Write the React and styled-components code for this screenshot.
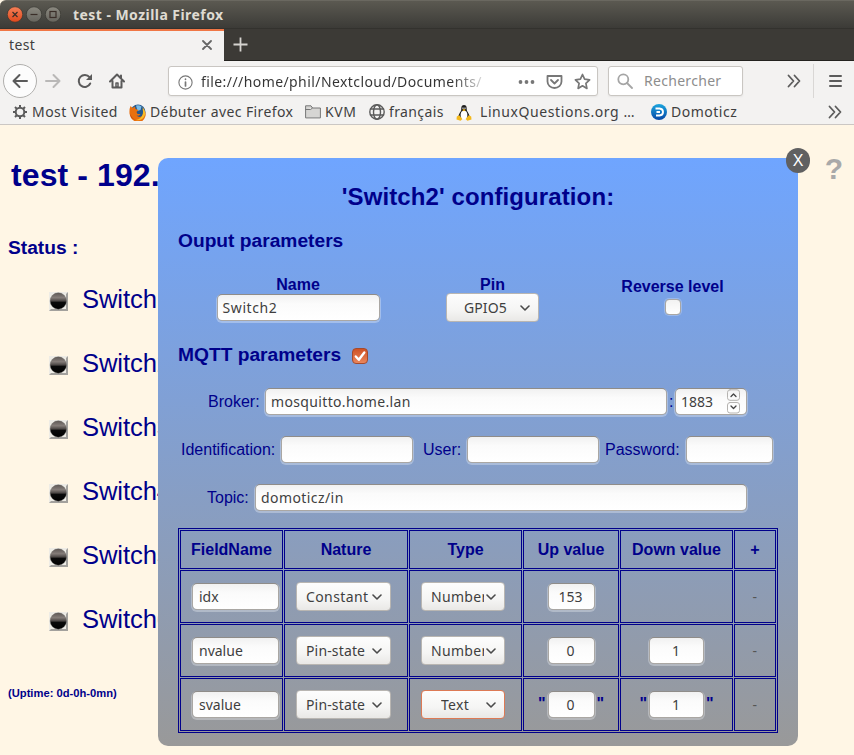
import React from "react";
import styled, { createGlobalStyle, css } from "styled-components";

const UI = `"Noto Sans", "Open Sans", sans-serif`;
const NAVY = "#00008b";

const Global = createGlobalStyle`
  *, *::before, *::after { box-sizing: border-box; }
  body { margin: 0; overflow: hidden; background: #fff6e5; font-family: "Liberation Sans", Arial, sans-serif; }
  svg { display: block; flex: none; }
`;

const Window = styled.div`
  position: relative;
  width: 854px;
  height: 755px;
  display: flex;
  flex-direction: column;
  overflow: hidden;
`;

/* ---------- browser chrome ---------- */
const TitleBar = styled.header`
  height: 29px;
  flex: none;
  display: flex;
  align-items: center;
  gap: 3px;
  padding-left: 7px;
  background: linear-gradient(#5b5951, #45443f 70%, #3c3b37);
  border-top: 1px solid #6a6860;
  border-bottom: 1px solid #33322e;
  border-radius: 6px 0 0 0;
`;

const WindowTitle = styled.h1`
  margin: 0 0 0 9px;
  font: 700 14px/20px ${UI};
  letter-spacing: 0.45px;
  color: #dfdbd2;
  white-space: nowrap;
`;

const TabStrip = styled.nav`
  height: 32px;
  flex: none;
  display: flex;
  align-items: center;
  background: #3c3a36;
  border-bottom: 1px solid #23221f;
`;

const Tab = styled.div`
  width: 224px;
  height: 32px;
  flex: none;
  display: flex;
  align-items: center;
  justify-content: space-between;
  padding: 0 12px 2px 9px;
  background: #f3f2f1;
  border-top: 2px solid #f07746;
`;

const Text = styled.span`
  font: 400 14px/20px ${UI};
  letter-spacing: ${(p) => p.$ls ?? 0.38}px;
  color: ${(p) => p.$color || "#3f3f3f"};
  white-space: nowrap;
`;

const PlusIcon = styled.svg`
  margin-left: 9px;
`;

const Toolbar = styled.div`
  height: 40px;
  flex: none;
  display: flex;
  align-items: center;
  background: #f3f2f1;
  padding-left: 3px;
`;

const BackButton = styled.div`
  width: 34px;
  height: 34px;
  display: flex;
  align-items: center;
  justify-content: center;
  border: 1px solid #b0afad;
  border-radius: 50%;
  background: #fcfcfc;
`;

const ToolGroup = styled.div`
  display: flex;
  align-items: center;
  margin-left: 8px;
  gap: 16px;
  width: 123px;
`;

const Box = styled.div`
  height: 30px;
  flex: none;
  display: flex;
  align-items: center;
  background: #fff;
  border: 1px solid #c9c6c2;
  border-radius: 3px;
  box-shadow: 0 1px 2px rgba(0, 0, 0, 0.06);
`;

const AddressBox = styled(Box)`
  width: 430px;
  padding: 2px 0 0 9px;
`;

const Address = styled(Text)`
  width: 285px;
  margin: 0 32px 0 8px;
  background: linear-gradient(90deg, #333 88%, #ddd 99%);
  background-clip: text;
  color: transparent;
`;

const AddressActions = styled.div`
  display: flex;
  align-items: center;
  gap: 11px;
  padding-bottom: 1px;
`;

const SearchBox = styled(Box)`
  width: 135px;
  margin-left: 10px;
  padding-left: 8px;
  gap: 11px;
`;

const ToolEnd = styled.div`
  height: 34px;
  display: flex;
  align-items: center;
  margin-left: 44px;
`;

const Divider = styled.i`
  width: 1px;
  height: 34px;
  margin: 0 15px 0 12px;
  background: #d9d7d5;
`;

const Bookmarks = styled.div`
  height: 24px;
  flex: none;
  display: flex;
  align-items: center;
  padding: 0 0 1px 12px;
  background: #f3f2f1;
  border-bottom: 1px solid #cbc7c4;
`;

const Bookmark = styled.div`
  width: ${(p) => p.$w}px;
  flex: none;
  display: flex;
  align-items: center;
  gap: ${(p) => p.$gap || 4}px;
`;

/* ---------- page behind the dialog ---------- */
const Page = styled.main`
  flex: 1;
  display: flex;
  flex-direction: column;
  padding: 30px 8px 0;
  background: #fff6e5;
  color: ${NAVY};
`;

const PageHead = styled.div`
  display: flex;
  justify-content: space-between;
  height: 40px;
  padding: 0 3px;
`;

const PageTitle = styled.h2`
  margin: 0;
  font-size: 32px;
  line-height: 40px;
  letter-spacing: 0.1px;
  white-space: nowrap;
`;

const Help = styled.b`
  font-size: 30px;
  line-height: 28px;
  color: #a9a9a9;
`;

const StatusTitle = styled.h3`
  margin: 41px 0 7px;
  font-size: 19.2px;
  line-height: 24px;
`;

const SwitchRow = styled.div`
  height: 64px;
  display: flex;
  align-items: center;
  gap: 14px;
  padding-left: 41px;
  font-size: 25.6px;
  letter-spacing: -0.1px;
  line-height: 30px;
`;

const Led = styled.svg`
  width: 19px;
  height: 19px;
  margin-top: 4px;
`;

const Uptime = styled.small`
  margin-top: 35px;
  font-size: 11.2px;
  font-weight: 700;
  line-height: 14px;
`;

/* ---------- dialog ---------- */
const Dialog = styled.section`
  position: absolute;
  left: 158px;
  top: 158px;
  width: 640px;
  height: 588px;
  padding: 25px 20px 0;
  border-radius: 10px;
  background: linear-gradient(#6fa5ff, #999);
  color: ${NAVY};
  font-size: 16px;
`;

const CloseButton = styled.div`
  position: absolute;
  right: -12px;
  top: -10px;
  width: 24px;
  height: 25px;
  border-radius: 12px;
  background: #606061;
  color: #fff;
  text-align: center;
  line-height: 25px;
`;

const DialogTitle = styled.h2`
  margin: 0;
  font-size: 24px;
  line-height: 28px;
  letter-spacing: 0.1px;
  text-align: center;
`;

const SectionTitle = styled.h3`
  display: flex;
  align-items: center;
  gap: 11px;
  height: 22px;
  margin: ${(p) => p.$top}px 0 0;
  font-size: 19.2px;
  line-height: 22px;
`;

const Params = styled.div`
  display: grid;
  grid-template-columns: 240px 149px 211px;
  height: 48px;
  margin-top: 22px;
`;

const Param = styled.label`
  display: flex;
  flex-direction: column;
  align-items: center;
  padding-top: ${(p) => p.$pad || 0}px;
  font-weight: 700;
`;

const ParamLabel = styled.span`
  height: ${(p) => p.$h}px;
  line-height: 22px;
`;

const Field = styled.span`
  width: ${(p) => p.$w}px;
  height: 27px;
  flex: none;
  display: flex;
  align-items: center;
  justify-content: ${(p) => (p.$center ? "center" : "flex-start")};
  padding: 0 6px 0 5px;
  border: 1px solid #aaa7a3;
  border-top-color: #8f8c89;
  border-radius: 5px;
  background: linear-gradient(#f1f1f1, #fbfbfb 35%, #fff);
  box-shadow: 0 1px 0 1px rgba(255, 255, 255, 0.3);
`;

const PortField = styled(Field)`
  justify-content: space-between;
`;

const Dropdown = styled.span`
  width: ${(p) => p.$w}px;
  height: 29px;
  flex: none;
  display: flex;
  align-items: center;
  padding: 0 8px 0 ${(p) => p.$pad || 9}px;
  justify-content: space-between;
  border: 1px solid ${(p) => (p.$focus ? "#dd7a55" : "#b9b6b2")};
  border-radius: 4px;
  background: linear-gradient(#fdfdfd, #f5f5f4 60%, #e9e8e6);

  ${Text} {
    overflow: hidden;
    width: ${(p) => (p.$clip ? `${p.$clip}px` : "auto")};
  }
`;

const CheckBox = styled.span`
  width: 16px;
  height: 16px;
  display: flex;
  border-radius: 4px;
  border: 1px solid #aaa7a3;
  background: linear-gradient(#f2f2f2, #fff);
  box-shadow: 0 0 0 1px rgba(255, 255, 255, 0.25);
  ${(p) =>
    p.$on &&
    css`
      margin-top: 1px;
      border-color: #a64a2c;
      background: linear-gradient(#cf5225, #e9865c);
      box-shadow: none;
    `}
`;

const FormRow = styled.div`
  display: flex;
  height: 27px;
  margin-top: ${(p) => p.$top}px;
  padding-left: ${(p) => p.$left}px;
  line-height: 27px;
`;

const Caption = styled.span`
  width: ${(p) => p.$w}px;
  flex: none;
  padding-left: ${(p) => p.$pad || 0}px;
  white-space: nowrap;
`;

const Table = styled.div`
  display: grid;
  grid-template-columns: 103px 124px 113px 96px 113px 42px;
  grid-template-rows: 39px 53px 53px 53px;
  gap: 1px;
  width: 600px;
  margin-top: 17px;
  padding: 1px;
  border: 1px solid ${NAVY};
`;

const Cell = styled.div`
  display: flex;
  align-items: center;
  justify-content: center;
  gap: 2px;
  border: 1px solid ${NAVY};
  font-weight: 700;
  white-space: nowrap;
`;

const NameCell = styled(Cell)`
  justify-content: flex-start;
  padding-left: 11px;

  ${Text} {
    padding-left: 1px;
  }
`;

const SelectCell = styled(Cell)`
  justify-content: flex-start;
  padding: 0 0 0 11px;
`;

const Quote = styled.span`
  height: 19px;
`;

/* ---------- icons ---------- */
const WinButton = ({ kind }) => (
  <svg width="16" height="17" viewBox="0 0 16 17">
    <defs>
      <linearGradient id={`wb-${kind}`} x2="0" y2="1">
        <stop stopColor={kind === "close" ? "#f58058" : "#8b8980"} />
        <stop offset="1" stopColor={kind === "close" ? "#e0481b" : "#66645d"} />
      </linearGradient>
    </defs>
    <circle cx="8" cy="8.5" r="7.7" fill={`url(#wb-${kind})`} stroke="#33322e" strokeWidth=".6" />
    <g fill="none" stroke="#3a2e28" strokeWidth="1.2">
      {kind === "close" && <path d="M5.5 6l5 5m0-5l-5 5" />}
      {kind === "min" && <path d="M4.500 8.500h7" />}
      {kind === "max" && <rect x="5" y="5.5" width="6" height="6" />}
    </g>
  </svg>
);

const SwitchLed = () => (
  <Led viewBox="0 0 19 19">
    <defs>
      <linearGradient id="led" x2="0" y2="1">
        <stop stopColor="#5e5855" />
        <stop offset=".3" stopColor="#857d79" />
        <stop offset=".5" stopColor="#4a4543" />
        <stop offset=".58" stopColor="#0a0a0a" />
        <stop offset="1" stopColor="#000" />
      </linearGradient>
    </defs>
    <path d="M0 0h19v19H0z" fill="#eeece6" />
    <path d="M19 0v19H0l2-2h15V2z" fill="#a3a19d" />
    <circle cx="9.300" cy="9" r="8.200" fill="url(#led)" stroke="#6b6764" strokeWidth=".4" />
  </Led>
);

const Glyph = ({ d, w = 16, h = 16, color = "#5b5b5b", sw = 2, children }) => (
  <svg width={w} height={h} viewBox={`0 0 ${w} ${h}`} fill="none" stroke={color} strokeWidth={sw} strokeLinecap="round" strokeLinejoin="round">
    {d && <path d={d} />}
    {children}
  </svg>
);

const Chevron = () => <Glyph w={10} h={10} sw={1.6} color="#4a4a4a" d="M1 3l4 4l4-4" />;
const More = () => <Glyph w={14} h={14} sw={1.8} d="M1.500 1.500l5 5.500l-5 5.500M7.500 1.500l5 5.500l-5 5.500" />;

const FoxIcon = () => (
  <svg width="17" height="17" viewBox="0 0 17 17">
    <circle cx="9" cy="8" r="7.500" fill="#24588f" />
    <path d="M7 1.500q3-1 5.500 1l-1 3.500-3 1z" fill="#79bde8" />
    <path d="M1.500 2l2 2 2.500-1.500.5 2.500 3 1-2 2 1 2 3 0q-2 3-4 1 2 3.500 5.500 1 2-3 .5-7 4 3 3 7-2 6.500-8 6.500Q1 16 .5 9 .2 5 1.500 2z" fill="#e9700f" />
    <path d="M13.500 3q4.500 5 1.500 10-3 4-8 3 5-1 6.500-5 1-3 0-8z" fill="#f9bd28" />
    <path d="M.7 9q.8 6 6.300 7.300-5-2.300-6.300-7.300z" fill="#b53a12" />
  </svg>
);

const TuxIcon = () => (
  <svg width="16" height="17" viewBox="0 0 16 17">
    <path d="M8 1c-3 0-2.600 3-2.800 5C5 8 2 10 2.500 14h11c.5-4-2.500-6-2.700-8C10.600 4 11 1 8 1z" fill="#1c1c1c" />
    <ellipse cx="8" cy="11" rx="3.400" ry="4.300" fill="#fff" />
    <path d="M6.500 3.500h1v1.500h-1zM8.500 3.500h1v1.500h-1z" fill="#fff" />
    <path d="M6.200 6L8 5l1.800 1L8 7.300z" fill="#f4b91c" />
    <path d="M.8 12.500l2.400-1.200 3.200 3.700-1.800 1.700L.5 15.500zM15.200 12.500l-2.400-1.200-3.200 3.700 1.800 1.700 4.100-1.200z" fill="#f4b91c" />
  </svg>
);

const DomoticzIcon = () => (
  <svg width="16" height="16" viewBox="0 0 16 16">
    <defs>
      <linearGradient id="dz" x2="0" y2="1">
        <stop stopColor="#1ba6de" />
        <stop offset="1" stopColor="#0747a6" />
      </linearGradient>
    </defs>
    <circle cx="8" cy="8" r="8" fill="url(#dz)" />
    <path d="M4.500 4.500H8.500q3.500.3 3.500 3.500t-3.500 3.500H5M5.500 8H9" fill="none" stroke="#fff" strokeWidth="1.900" />
  </svg>
);

const GearIcon = () => (
  <Glyph sw={2}>
    <circle cx="8" cy="8" r="4.300" />
    <path strokeLinecap="butt" d="M8 1v3M8 12v3M1 8h3M12 8h3M3 3l2.100 2.100M11 11l2 2M13 3L11 5M5 11l-2 2" />
  </Glyph>
);

const Spinner = () => (
  <Glyph w={13} h={25} sw={1} color="#b5b3b0">
    <rect x=".5" y=".8" width="12" height="10.500" rx="2.500" />
    <rect x=".5" y="13.500" width="12" height="10.500" rx="2.500" />
    <path stroke="#444" strokeWidth="1.300" d="M4 7.500l2.500-2.500l2.500 2.500M4 17l2.500 2.500l2.500-2.500" />
  </Glyph>
);

/* ---------- data ---------- */
const switches = ["Switch1", "Switch2", "Switch3", "Switch4", "Switch5", "Switch6"];
const columns = ["FieldName", "Nature", "Type", "Up value", "Down value", "+"];
const fields = [
  { name: "idx", nature: "Constant", type: "Number", up: "153" },
  { name: "nvalue", nature: "Pin-state", type: "Number", up: "0", down: "1" },
  { name: "svalue", nature: "Pin-state", type: "Text", up: "0", down: "1" },
];

const ValueCell = ({ value, width, quoted }) => (
  <Cell>
    {quoted && <Quote>"</Quote>}
    {value !== undefined && (
      <Field $w={width} $center>
        <Text $ls={0}>{value}</Text>
      </Field>
    )}
    {quoted && <Quote>"</Quote>}
  </Cell>
);

const FieldRow = ({ row }) => {
  const isText = row.type === "Text";
  return (
    <>
      <NameCell>
        <Field $w={87}>
          <Text $ls={0}>{row.name}</Text>
        </Field>
      </NameCell>
      <SelectCell>
        <Dropdown $w={95}>
          <Text $ls={row.nature === "Constant" ? 0.4 : 0.15}>{row.nature}</Text>
          <Chevron />
        </Dropdown>
      </SelectCell>
      <SelectCell>
        <Dropdown $w={84} $focus={isText} $pad={isText ? 19 : 9} $clip={isText ? 0 : 53}>
          <Text $ls={0.3}>{row.type}</Text>
          <Chevron />
        </Dropdown>
      </SelectCell>
      <ValueCell value={row.up} width={47} quoted={isText} />
      <ValueCell value={row.down} width={55} quoted={isText} />
      <Cell>
        <Text $color="#555">-</Text>
      </Cell>
    </>
  );
};

export default function App() {
  return (
    <Window>
      <Global />
      <TitleBar>
        <WinButton kind="close" />
        <WinButton kind="min" />
        <WinButton kind="max" />
        <WindowTitle>test - Mozilla Firefox</WindowTitle>
      </TitleBar>
      <TabStrip>
        <Tab>
          <Text>test</Text>
          <Glyph w={10} h={10} sw={1.8} color="#666" d="M1 1l8 8M9 1l-8 8" />
        </Tab>
        <PlusIcon width="15" height="15" viewBox="0 0 15 15" fill="none" stroke="#d5d3cf" strokeWidth="1.800">
          <path d="M7.500 .5v14M.5 7.500h14" />
        </PlusIcon>
      </TabStrip>
      <Toolbar>
        <BackButton>
          <Glyph d="M15 8H1.500M7.500 2L1.500 8l6 6" />
        </BackButton>
        <ToolGroup>
          <Glyph color="#b9b8b7" d="M1 8h13.500M8.500 2l6 6l-6 6" />
          <Glyph>
            <path d="M13.200 10.500A6 6 0 1 1 12.500 4.200" />
            <path d="M15 1v6H9z" fill="#5b5b5b" stroke="none" />
          </Glyph>
          <Glyph>
            <path d="M1 8.500L8 1.500l7 7M3.500 8v6.500h9V8M12 2.500v3" />
            <path strokeWidth="1.500" d="M7 10h2v4H7z" />
          </Glyph>
        </ToolGroup>
        <AddressBox>
          <Glyph w={15} h={15} sw={1.1} color="#777">
            <circle cx="7.500" cy="7.500" r="6.600" />
            <path strokeWidth="1.700" d="M7.500 7v4M7.500 4.200v.1" />
          </Glyph>
          <Address $ls={0.42}>file:///home/phil/Nextcloud/Documents/</Address>
          <AddressActions>
            <Glyph w={17} sw={1}>
              <g fill="#777" stroke="none">
                <circle cx="2.500" cy="8" r="1.900" />
                <circle cx="8.500" cy="8" r="1.900" />
                <circle cx="14.500" cy="8" r="1.900" />
              </g>
            </Glyph>
            <Glyph w={17} color="#777" sw={1.8} d="M1.500 2h14v5.500a7 6.500 0 0 1-14 0zM5 6l3.500 3.500L12 6" />
            <Glyph w={17} h={17} color="#777" sw={1.7} d="M8.500 1.500l2.100 4.700 5 .6-3.700 3.500 1 5.100-4.400-2.600-4.400 2.600 1-5.100L1.400 6.800l5-.6z" />
          </AddressActions>
        </AddressBox>
        <SearchBox>
          <Glyph w={16} color="#a5a5a5" sw={1.8}>
            <circle cx="6.300" cy="6.300" r="5" />
            <path d="M10 10l5 5" />
          </Glyph>
          <Text $ls={0.3} $color="#8d8d8d">Rechercher</Text>
        </SearchBox>
        <ToolEnd>
          <More />
          <Divider />
          <Glyph w={13} h={12} d="M1 1h11M1 6h11M1 11h11" />
        </ToolEnd>
      </Toolbar>
      <Bookmarks>
        <Bookmark $w={117}>
          <GearIcon />
          <Text $ls={0.45}>Most Visited</Text>
        </Bookmark>
        <Bookmark $w={176}>
          <FoxIcon />
          <Text>Débuter avec Firefox</Text>
        </Bookmark>
        <Bookmark $w={64}>
          <Glyph color="#777" sw={1}>
            <path fill="#d6d5d3" d="M.6 13.500V1.800h5.400l1.500 2.200h7.900v9.500zM.6 5.500h5l1.900-1.500" />
          </Glyph>
          <Text $ls={0.6}>KVM</Text>
        </Bookmark>
        <Bookmark $w={87}>
          <Glyph sw={1.4}>
            <circle cx="8" cy="8" r="7.200" />
            <ellipse cx="8" cy="8" rx="3.500" ry="7.200" />
            <path d="M1.500 5h13M1.500 11h13" />
          </Glyph>
          <Text>français</Text>
        </Bookmark>
        <Bookmark $w={195} $gap={8}>
          <TuxIcon />
          <Text $ls={0.58}>LinuxQuestions.org …</Text>
        </Bookmark>
        <Bookmark $w={177}>
          <DomoticzIcon />
          <Text $ls={0.5}>Domoticz</Text>
        </Bookmark>
        <More />
      </Bookmarks>

      <Page>
        <PageHead>
          <PageTitle>test - 192.</PageTitle>
          <Help>?</Help>
        </PageHead>
        <StatusTitle>Status :</StatusTitle>
        {switches.map((name) => (
          <SwitchRow key={name}>
            <SwitchLed />
            <span>{name}</span>
          </SwitchRow>
        ))}
        <Uptime>(Uptime: 0d-0h-0mn)</Uptime>
      </Page>

      <Dialog>
        <CloseButton>X</CloseButton>
        <DialogTitle>'Switch2' configuration:</DialogTitle>
        <SectionTitle $top={19}>Ouput parameters</SectionTitle>
        <Params>
          <Param>
            <ParamLabel $h={20}>Name</ParamLabel>
            <Field $w={163}>
              <Text $ls={0.6}>Switch2</Text>
            </Field>
          </Param>
          <Param>
            <ParamLabel $h={19}>Pin</ParamLabel>
            <Dropdown $w={93} $pad={17}>
              <Text $ls={0.1}>GPIO5</Text>
              <Chevron />
            </Dropdown>
          </Param>
          <Param $pad={2}>
            <ParamLabel $h={23}>Reverse level</ParamLabel>
            <CheckBox />
          </Param>
        </Params>
        <SectionTitle $top={22}>
          MQTT parameters
          <CheckBox $on>
            <Glyph w={14} h={14} color="#fff" sw={2.4} d="M2.800 7.500l3 3.300L11.300 3.500" />
          </CheckBox>
        </SectionTitle>
        <FormRow $top={22} $left={30}>
          <Caption $w={57}>Broker:</Caption>
          <Field $w={402}>
            <Text $ls={0.35}>mosquitto.home.lan</Text>
          </Field>
          <Caption $w={8} $pad={2}>:</Caption>
          <PortField $w={72}>
            <Text $ls={0}>1883</Text>
            <Spinner />
          </PortField>
        </FormRow>
        <FormRow $top={21} $left={3}>
          <Caption $w={100}>Identification:</Caption>
          <Field $w={132} />
          <Caption $w={54} $pad={10}>User:</Caption>
          <Field $w={132} />
          <Caption $w={87} $pad={6}>Password:</Caption>
          <Field $w={87} />
        </FormRow>
        <FormRow $top={21} $left={29}>
          <Caption $w={48}>Topic:</Caption>
          <Field $w={492}>
            <Text $ls={0.42}>domoticz/in</Text>
          </Field>
        </FormRow>
        <Table>
          {columns.map((label) => (
            <Cell key={label}>{label}</Cell>
          ))}
          {fields.map((row) => (
            <FieldRow key={row.name} row={row} />
          ))}
        </Table>
      </Dialog>
    </Window>
  );
}
